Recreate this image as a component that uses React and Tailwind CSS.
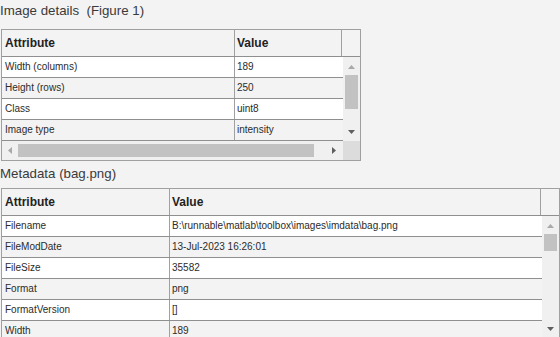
const imageRows = [
  ['Width (columns)', '189'],
  ['Height (rows)', '250'],
  ['Class', 'uint8'],
  ['Image type', 'intensity'],
];

const metaRows = [
  ['Filename', 'B:\\runnable\\matlab\\toolbox\\images\\imdata\\bag.png'],
  ['FileModDate', '13-Jul-2023 16:26:01'],
  ['FileSize', '35582'],
  ['Format', 'png'],
  ['FormatVersion', '[]'],
  ['Width', '189'],
];

function Arrow({ dir, dark }) {
  const color = dark ? '#5f5f5f' : '#a9a9a9';
  const pts = {
    up: '0,4 3.5,0 7,4',
    down: '0,0 7,0 3.5,4',
    left: '4,0 4,7 0,3.5',
    right: '0,0 0,7 4,3.5',
  }[dir];
  const vertical = dir === 'up' || dir === 'down';
  return (
    <svg width={vertical ? 7 : 4} height={vertical ? 4 : 7} className="block">
      <polygon points={pts} fill={color} />
    </svg>
  );
}

function Row({ label, value, odd, leftW, rightW }) {
  return (
    <div
      className={`flex h-[21px] border-b border-[#8f8f8f] text-[10px] text-[#2b2b2b] ${odd ? 'bg-[#f3f3f3]' : 'bg-white'}`}>
      <div className={`${leftW} shrink-0 border-r border-[#a0a0a0] pl-[3px] pb-[1px] flex items-center`}>{label}</div>
      <div className={`${rightW} shrink-0 pl-[2px] pb-[1px] flex items-center whitespace-nowrap`}>{value}</div>
    </div>
  );
}

export default function App() {
  return (
    <div className="w-[560px] h-[337px] overflow-hidden bg-[#f3f3f3] font-['Liberation_Sans',Arial,sans-serif] text-[#222]">
      <div className="h-[29px] pt-[2px] text-[13.3px] leading-[18px] text-[#3a3a3a] whitespace-pre">Image details  (Figure 1)</div>

      <div className="ml-[1px] w-[360px] border border-[#a0a0a0] bg-[#f3f3f3]">
        <div className="flex h-[27px] border-b border-[#8f8f8f] text-[12px] font-bold text-[#222]">
          <div className="w-[233px] shrink-0 border-r border-[#a0a0a0] pl-[3px] flex items-center">Attribute</div>
          <div className="w-[107px] shrink-0 border-r border-[#a0a0a0] pl-[2px] flex items-center">Value</div>
          <div className="flex-1" />
        </div>
        <div className="flex">
          <div className="w-[341px] shrink-0">
            {imageRows.map(([k, v], i) => (
              <Row key={k} label={k} value={v} odd={i % 2 === 1} leftW="w-[233px]" rightW="w-[108px]" />
            ))}
          </div>
          <div className="flex-1 flex flex-col items-center bg-[#f0f0f0] h-[84px]">
            <div className="h-[17px] flex items-center justify-center pt-[2px]"><Arrow dir="up" /></div>
            <div className="w-[13px] h-[34px] bg-[#c2c2c2] mt-[1px]" />
            <div className="flex-1" />
            <div className="h-[17px] flex items-center justify-center pb-[2px]"><Arrow dir="down" dark /></div>
          </div>
        </div>
        <div className="flex h-[19px]">
          <div className="w-[341px] shrink-0 flex items-center bg-[#f0f0f0]">
            <div className="w-[16px] flex justify-center"><Arrow dir="left" /></div>
            <div className="w-[296px] h-[13px] bg-[#c2c2c2]" />
            <div className="flex-1 flex justify-center pl-[10px]"><Arrow dir="right" dark /></div>
          </div>
          <div className="flex-1 bg-[#dcdcdc]" />
        </div>
      </div>

      <div className="h-[27px] pt-[4px] text-[13.3px] leading-[18px] text-[#3a3a3a]">Metadata (bag.png)</div>

      <div className="ml-[1px] w-[559px] border border-[#a0a0a0] bg-[#f3f3f3]">
        <div className="flex h-[27px] border-b border-[#8f8f8f] text-[12px] font-bold text-[#222]">
          <div className="w-[168px] shrink-0 border-r border-[#a0a0a0] pl-[3px] flex items-center">Attribute</div>
          <div className="w-[371px] shrink-0 border-r border-[#a0a0a0] pl-[2px] flex items-center">Value</div>
          <div className="flex-1" />
        </div>
        <div className="flex">
          <div className="w-[540px] shrink-0">
            {metaRows.map(([k, v], i) => (
              <Row key={k} label={k} value={v} odd={i % 2 === 1} leftW="w-[168px]" rightW="w-[372px]" />
            ))}
          </div>
          <div className="flex-1 flex flex-col items-center bg-[#f0f0f0] h-[122px]">
            <div className="h-[17px] flex items-center justify-center pt-[2px]"><Arrow dir="up" /></div>
            <div className="w-[13px] h-[17px] bg-[#c2c2c2] mt-[1px]" />
            <div className="flex-1" />
            <div className="h-[17px] flex items-center justify-center pb-[2px]"><Arrow dir="down" dark /></div>
          </div>
        </div>
      </div>
    </div>
  );
}
